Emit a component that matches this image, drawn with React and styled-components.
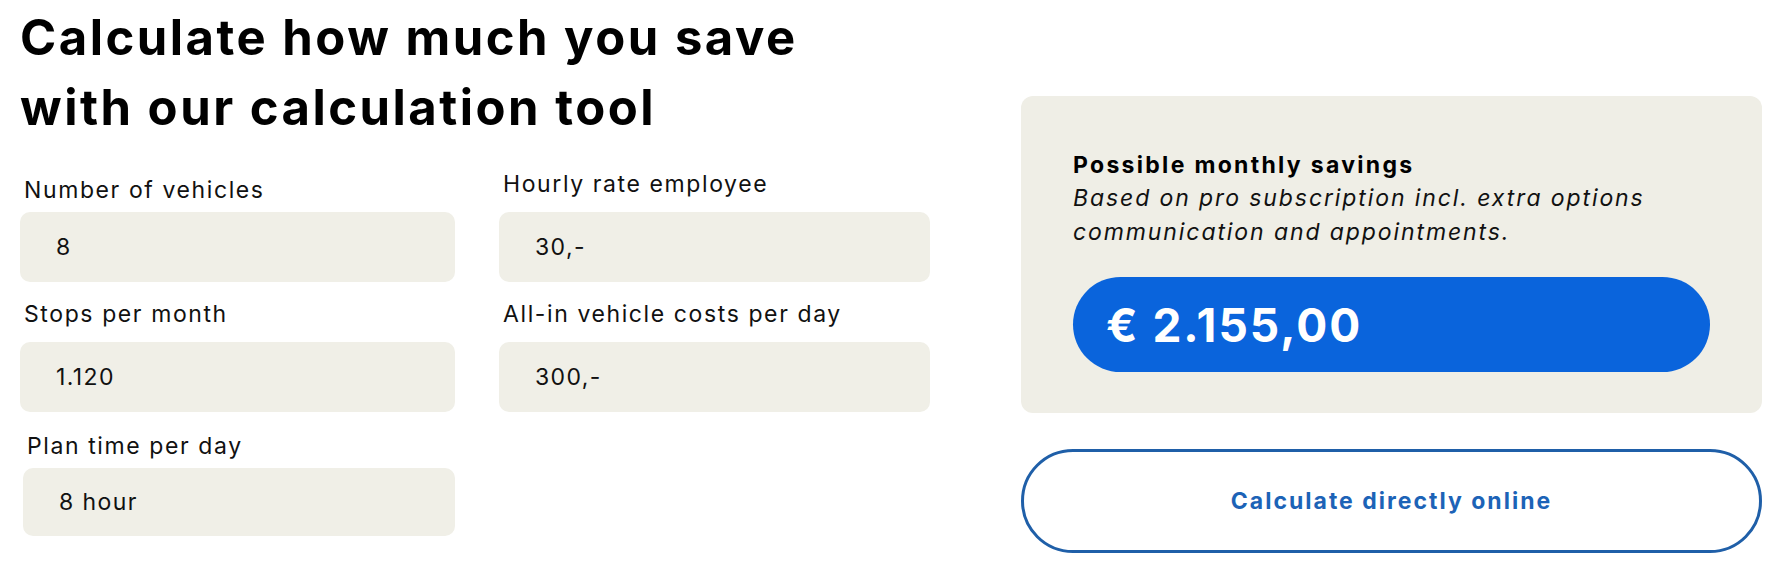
import React from 'react';
import styled, { createGlobalStyle } from 'styled-components';

const GlobalStyle = createGlobalStyle`
  html, body {
    margin: 0;
    padding: 0;
    background: #fff;
  }
  body {
    font-family: Inter, "Noto Sans", sans-serif;
    color: #111;
  }
`;

const Page = styled.div`
  display: flex;
  gap: 91px;
  padding: 3px 24px 0 20px;
`;

const LeftColumn = styled.div`
  width: 910px;
  flex-shrink: 0;
`;

const Title = styled.h1`
  margin: 0 0 27px;
  font-size: 49px;
  line-height: 70px;
  font-weight: 700;
  letter-spacing: 2.5px;
  color: #000;
`;

const FormGrid = styled.div`
  display: grid;
  grid-template-columns: 435px 429px;
  column-gap: 46px;
  row-gap: 18px;
  align-items: end;
`;

const Field = styled.label`
  display: flex;
  flex-direction: column;
  margin-left: ${p => p.$shift || 0}px;
  margin-top: ${p => p.$top || 0}px;
`;

const Label = styled.span`
  font-size: 23px;
  line-height: 28px;
  letter-spacing: 1.6px;
  margin: 0 0 ${p => p.$gap}px 4px;
  color: #111;
`;

const Input = styled.div`
  height: ${p => p.$tall ? 70 : 68}px;
  background: #f0efe7;
  border-radius: 10px;
  display: flex;
  align-items: center;
  padding-left: 36px;
  font-size: 23px;
  letter-spacing: 1.4px;
  color: #111;
`;

const RightColumn = styled.div`
  flex: 1;
  padding-top: 93px;
  display: flex;
  flex-direction: column;
  gap: 36px;
`;

const Card = styled.div`
  background: #efeee6;
  border-radius: 12px;
  padding: 52px 52px 41px;
`;

const CardTitle = styled.div`
  font-size: 23px;
  line-height: 34px;
  font-weight: 700;
  letter-spacing: 2.3px;
  color: #000;
`;

const CardText = styled.p`
  margin: -1px 0 28px;
  font-size: 23px;
  line-height: 34px;
  font-style: italic;
  letter-spacing: 1.9px;
  color: #111;
`;

const Amount = styled.div`
  height: 95px;
  border-radius: 48px;
  background: #0a64dc;
  color: #fff;
  display: flex;
  align-items: center;
  padding-left: 33px;
  font-size: 46px;
  font-weight: 700;
  letter-spacing: 2px;
`;

const CtaButton = styled.button`
  height: 104px;
  border: 3px solid #1f5fa8;
  border-radius: 52px;
  background: #fff;
  color: #1c63b7;
  font-family: inherit;
  font-size: 23px;
  font-weight: 700;
  letter-spacing: 2px;
  cursor: pointer;
`;

const fields = [
  { label: 'Number of vehicles', value: '8', tall: true, gap: 8 },
  { label: 'Hourly rate employee', value: '30,-', tall: true, gap: 14, shift: -2 },
  { label: 'Stops per month', value: '1.120', tall: true, gap: 14 },
  { label: 'All-in vehicle costs per day', value: '300,-', tall: true, gap: 14, shift: -2 },
  { label: 'Plan time per day', value: '8 hour', gap: 8, shift: 3, top: 2 },
];

export default function App() {
  return (
    <>
      <GlobalStyle />
      <Page>
        <LeftColumn>
          <Title>
            Calculate how much you save
            <br />
            with our calculation tool
          </Title>
          <FormGrid>
            {fields.map(f => (
              <Field key={f.label} $shift={f.shift} $top={f.top}>
                <Label $gap={f.gap}>{f.label}</Label>
                <Input $tall={f.tall}>{f.value}</Input>
              </Field>
            ))}
          </FormGrid>
        </LeftColumn>
        <RightColumn>
          <Card>
            <CardTitle>Possible monthly savings</CardTitle>
            <CardText>
              Based on pro subscription incl. extra options
              <br />
              communication and appointments.
            </CardText>
            <Amount>€ 2.155,00</Amount>
          </Card>
          <CtaButton>Calculate directly online</CtaButton>
        </RightColumn>
      </Page>
    </>
  );
}
